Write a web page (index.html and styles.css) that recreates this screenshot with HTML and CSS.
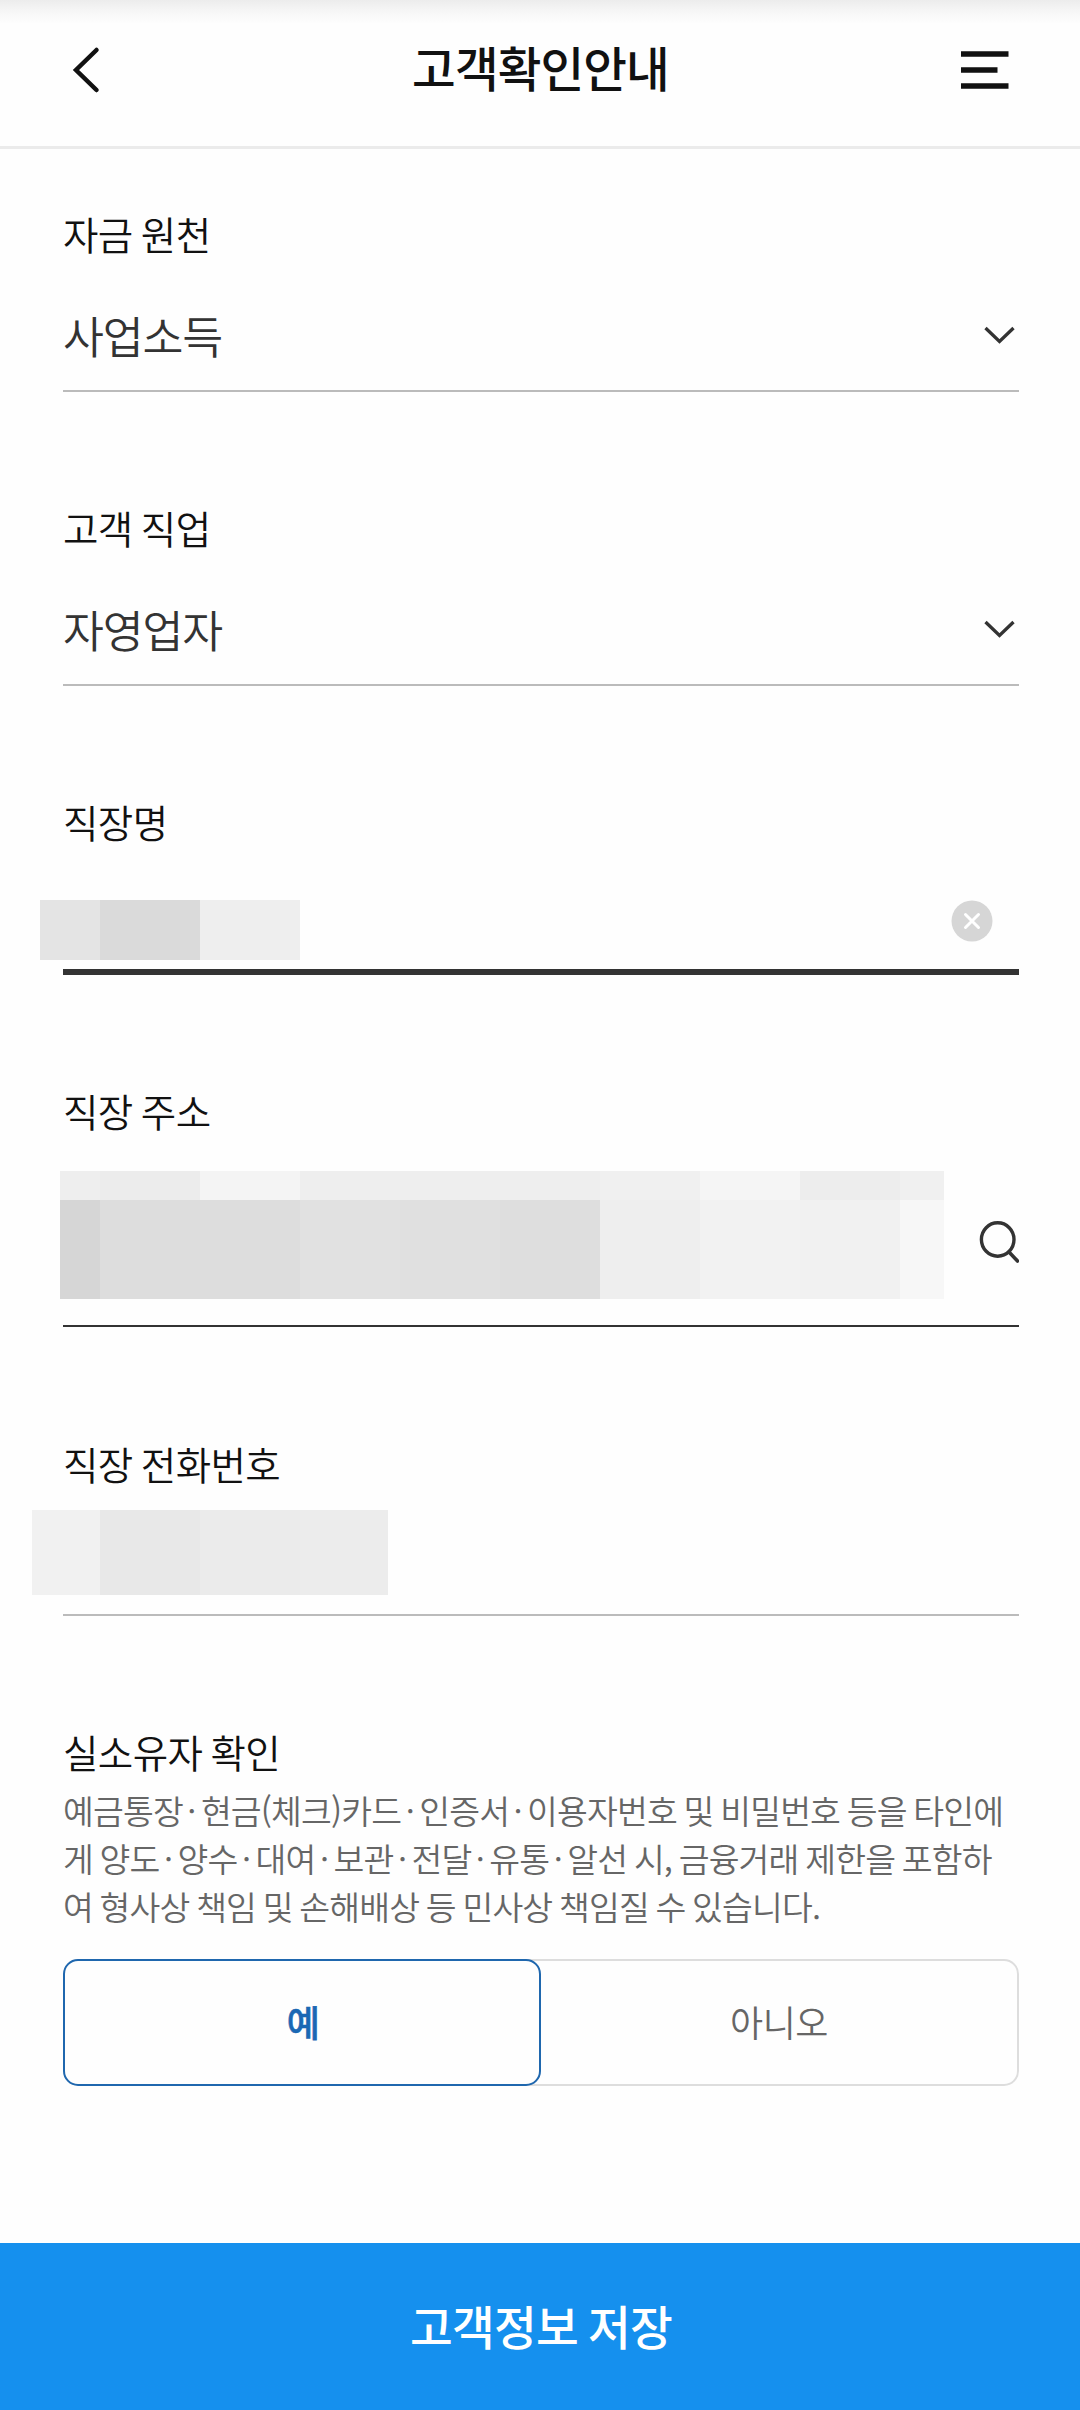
FILE: index.html
```html
<!DOCTYPE html>
<html lang="ko">
<head>
<meta charset="utf-8">
<title>고객확인안내</title>
<link rel="stylesheet" href="styles.css">
</head>
<body>
<div class="page">
  <header class="header">
    <svg class="back" viewBox="0 0 32 48"><path d="M26.500 4 6 24l20.500 20" fill="none" stroke="#111" stroke-width="4.500" stroke-linecap="round"/></svg>
    <h1 class="title">고객확인안내</h1>
    <svg class="menu" viewBox="0 0 48 38"><path d="M0 3h47.500M0 19h36.500M0 35h47.500" stroke="#111" stroke-width="5.500"/></svg>
  </header>
  <main class="form">
    <section class="field">
      <h2 class="label">자금 원천</h2>
      <div class="control">
        <span class="value">사업소득</span>
        <svg class="chevron" viewBox="0 0 32 18"><path d="m1.500 2 14 13.500 14-13.500" fill="none" stroke="#333" stroke-width="3.300"/></svg>
      </div>
    </section>
    <section class="field">
      <h2 class="label">고객 직업</h2>
      <div class="control">
        <span class="value">자영업자</span>
        <svg class="chevron" viewBox="0 0 32 18"><path d="m1.500 2 14 13.500 14-13.500" fill="none" stroke="#333" stroke-width="3.300"/></svg>
      </div>
    </section>
    <section class="field field-company">
      <h2 class="label">직장명</h2>
      <div class="control control-focus">
        <div class="mask mask-company"><i class="tone-e4"></i><i class="tone-da"></i><i class="tone-ee"></i></div>
        <svg class="clear" viewBox="0 0 42 42"><circle cx="21" cy="21" r="20.500" fill="#d6d6d6"/><path d="m14.500 14.500 13 13m0-13-13 13" stroke="#fff" stroke-width="3" stroke-linecap="round"/></svg>
      </div>
    </section>
    <section class="field field-address">
      <h2 class="label">직장 주소</h2>
      <div class="control control-dark">
        <div class="mask mask-address">
          <i class="tone-ee"></i><i class="tone-ec"></i><i class="tone-f4"></i><i class="tone-ee"></i><i class="tone-ee"></i><i class="tone-ee"></i><i class="tone-f0"></i><i class="tone-f5"></i><i class="tone-ed"></i><i class="tone-f0"></i>
          <i class="tone-d6"></i><i class="tone-dd"></i><i class="tone-dd"></i><i class="tone-e1"></i><i class="tone-e0"></i><i class="tone-de"></i><i class="tone-ee"></i><i class="tone-f2"></i><i class="tone-f1"></i><i class="tone-f7"></i>
        </div>
        <svg class="search" viewBox="0 0 40 42"><ellipse cx="18.700" cy="18.500" rx="16.300" ry="16.700" fill="none" stroke="#333" stroke-width="3.400"/><path d="m30 31 8.500 9" stroke="#333" stroke-width="3.600" stroke-linecap="round"/></svg>
      </div>
    </section>
    <section class="field field-phone">
      <h2 class="label">직장 전화번호</h2>
      <div class="control">
        <div class="mask mask-phone"><i class="tone-f1"></i><i class="tone-e8"></i><i class="tone-eb"></i><i class="tone-ec"></i></div>
      </div>
    </section>
    <section class="owner">
      <h2 class="label">실소유자 확인</h2>
      <p class="notice">예금통장<span class="dot">·</span>현금(체크)카드<span class="dot">·</span>인증서<span class="dot">·</span>이용자번호 및 비밀번호 등을 타인에<br>게 양도<span class="dot">·</span>양수<span class="dot">·</span>대여<span class="dot">·</span>보관<span class="dot">·</span>전달<span class="dot">·</span>유통<span class="dot">·</span>알선 시, 금융거래 제한을 포함하<br>여 형사상 책임 및 손해배상 등 민사상 책임질 수 있습니다.</p>
      <div class="choices">
        <button class="choice selected" type="button">예</button>
        <button class="choice" type="button">아니오</button>
      </div>
    </section>
  </main>
  <button class="save" type="button">고객정보 저장</button>
</div>
</body>
</html>
```
FILE: styles.css
```css
* { box-sizing: border-box; }
body { margin: 0; background: #fefefe; }
body, button { font-family: "Noto Sans CJK KR", sans-serif; }
.page { width: 1080px; height: 2410px; display: flex; flex-direction: column; }
svg { display: block; flex: none; }

.header {
  flex: none;
  height: 149px;
  display: grid;
  grid-template-columns: 48px 1fr 48px;
  align-items: start;
  padding: 0 71px 0 70px;
  border-bottom: 3px solid #ebebeb;
  background: linear-gradient(#ececec, #f6f6f6 11px, #fefefe 24px);
}
.back { width: 32px; height: 48px; margin-top: 46px; }
.menu { width: 48px; height: 38px; margin-top: 51px; }
.title {
  margin: 32px 0 0 2px;
  font-size: 47.5px;
  line-height: 70px;
  font-weight: 500;
  letter-spacing: -0.9px;
  text-align: center;
  color: #111;
}

.form { flex: 1; padding: 57px 61px 0 63px; }
.field { height: 294px; }
.label {
  margin: 0 0 4px;
  font-size: 38.5px;
  line-height: 54px;
  font-weight: 350;
  letter-spacing: -0.6px;
  word-spacing: -2px;
  color: #111;
}
.control {
  height: 128px;
  display: flex;
  justify-content: space-between;
  border-bottom: 2px solid #bbb;
}
.value {
  margin-top: 38px;
  font-size: 44.5px;
  line-height: 66px;
  font-weight: 350;
  letter-spacing: -1.2px;
  color: #333;
}
.chevron { width: 32px; height: 18px; margin: 62px 3px 0 0; }

.field-company { height: 289px; }
.field-company .control { height: 123px; padding-top: 6px; }
.control-focus { border-bottom: 6px solid #333; }
.clear { width: 42px; height: 42px; margin: 42px 26px 0 0; }
.field-address { height: 353px; }
.field-address .control { height: 186px; border-bottom: 2px solid #333; }
.search { width: 40px; height: 42px; margin: 80px 0 0; }
.field-phone { height: 288px; }
.field-phone .control { height: 122px; }

.mask { display: grid; flex: none; }
.mask-company { grid-template-columns: 60px 100px 100px; height: 60px; margin: 42px 0 0 -23px; }
.mask-address { grid-template: 29px 99px / 40px repeat(8, 100px) 44px; margin: 30px 0 0 -3px; }
.mask-phone { grid-template-columns: 68px 100px 100px 88px; height: 85px; margin: 16px 0 0 -31px; }
.tone-d6 { background: #d6d6d6; }
.tone-da { background: #dadada; }
.tone-dd { background: #ddd; }
.tone-de { background: #dedede; }
.tone-e0 { background: #e0e0e0; }
.tone-e1 { background: #e1e1e1; }
.tone-e4 { background: #e4e4e4; }
.tone-e8 { background: #e8e8e8; }
.tone-eb { background: #ebebeb; }
.tone-ec { background: #ececec; }
.tone-ed { background: #ededed; }
.tone-ee { background: #eee; }
.tone-f0 { background: #f0f0f0; }
.tone-f1 { background: #f1f1f1; }
.tone-f2 { background: #f2f2f2; }
.tone-f4 { background: #f4f4f4; }
.tone-f5 { background: #f5f5f5; }
.tone-f7 { background: #f7f7f7; }

.notice {
  margin: 8px 0 29px;
  font-size: 33.5px;
  line-height: 48px;
  font-weight: 350;
  letter-spacing: -0.85px;
  word-spacing: -1.9px;
  white-space: nowrap;
  color: #666;
}
.dot { display: inline-block; width: 18px; letter-spacing: 0; text-align: center; }
.choices { display: flex; height: 127px; }
.choice {
  width: 493px;
  margin-left: -15px;
  padding: 0 0 4px 15px;
  border: 2px solid #ddd;
  border-left: 0;
  border-radius: 0 15px 15px 0;
  background: transparent;
  font-size: 36px;
  font-weight: 350;
  letter-spacing: -0.5px;
  color: #666;
}
.choice.selected {
  position: relative;
  z-index: 1;
  width: 478px;
  margin-left: 0;
  padding-left: 2px;
  border: 2px solid #1f67ae;
  border-radius: 15px;
  background: #fefefe;
  font-weight: 500;
  -webkit-text-stroke: 0.6px #1a68b4;
  color: #1a68b4;
}
.save {
  flex: none;
  height: 167px;
  padding: 0 0 4px 2px;
  border: 0;
  background: #1590ee;
  color: #fff;
  font-size: 46.5px;
  font-weight: 500;
  letter-spacing: -0.8px;
  word-spacing: -2px;
}
```
